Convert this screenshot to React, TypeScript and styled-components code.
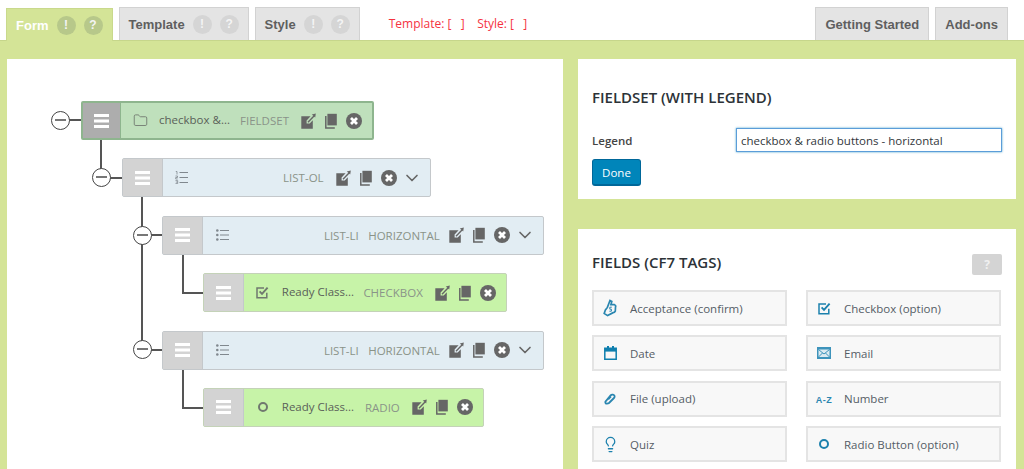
import React, { FC, ReactNode } from "react";
import styled, { createGlobalStyle } from "styled-components";
import { Folder, ChevronDown, Lightbulb } from "lucide-react";

const GlobalStyle = createGlobalStyle`
  html, body {
    margin: 0;
    padding: 0;
    height: 469px;
    overflow: hidden;
    background: #fff;
    font-family: "Open Sans", "Liberation Sans", sans-serif;
  }
`;

const EditIcon: FC = () => (
  <svg width="15" height="16" viewBox="0 0 15 16">
    <path d="M0.3 3.3H9.6L5.6 7.4V10.6H8.7L11.8 7.2V15.7H0.3z" fill="#666" />
    <path d="M7 9.3L13 3" stroke="#666" strokeWidth="1.4" fill="none" />
    <path d="M10.8 1.4L14.8 0.6L14.2 4.6z" fill="#666" />
  </svg>
);

const CopyIcon: FC = () => (
  <svg width="12" height="16" viewBox="0 0 12 16">
    <path d="M2.4 0.8h9.4v11.6H2.4z" fill="#666" />
    <path d="M0.8 3v12h9" stroke="#666" strokeWidth="1.5" fill="none" />
  </svg>
);

const RemoveIcon: FC = () => (
  <svg width="16" height="16" viewBox="0 0 16 16">
    <circle cx="8" cy="8" r="8" fill="#666" />
    <path d="M5 5l6 6M11 5l-6 6" stroke="#fff" strokeWidth="2.8" />
  </svg>
);

const HandleBars: FC = () => (
  <svg width="15" height="14" viewBox="0 0 15 14">
    <path d="M0 0h15v3H0zM0 5.5h15v3H0zM0 11h15v3H0z" fill="#fff" />
  </svg>
);

const RingIcon: FC<{ color: string }> = ({ color }) => (
  <svg width="12" height="12" viewBox="0 0 12 12">
    <circle cx="6" cy="6" r="4" fill="none" stroke={color} strokeWidth="2" />
  </svg>
);

const BulletListIcon: FC = () => (
  <svg width="13" height="12" viewBox="0 0 13 12">
    <circle cx="1.3" cy="1.5" r="1.3" fill="#80888e" />
    <circle cx="1.3" cy="6" r="1.3" fill="#80888e" />
    <circle cx="1.3" cy="10.5" r="1.3" fill="#80888e" />
    <path d="M4 1.5H13M4 6H13M4 10.5H13" stroke="#80888e" />
  </svg>
);

const OrderedListIcon: FC = () => (
  <svg width="13" height="13" viewBox="0 0 13 13">
    <path d="M0.8 0.5h1.2v3M0.5 5h2v1.5H0.7V8h2M0.5 9.6h2.2v3H0.5M0.9 11.1h1.8" stroke="#80888e" strokeWidth="0.8" fill="none" />
    <path d="M4.5 1.5H13M4.5 6.5H13M4.5 11.5H13" stroke="#80888e" />
  </svg>
);

const CheckIcon: FC<{ color: string }> = ({ color }) => (
  <svg width="13" height="13" viewBox="0 0 13 13">
    <path d="M10.8 6.8V11.8H1V2H8" fill="none" stroke={color} strokeWidth="1.5" />
    <path d="M3.6 5.4L6 7.8L11.6 1.6" fill="none" stroke={color} strokeWidth="1.9" />
  </svg>
);

const ThumbIcon: FC = () => (
  <svg width="14" height="18" viewBox="0 0 14 18">
    <path d="M7 1.5l1.8 1-.9 3.2h3.6c1 .4 1.4 1.4 1 2.4l-.2 4c-.4 1-1.2 1.6-2.2 1.6L4.6 16.6 1.2 14.4 2.4 11l2-2.6z" fill="none" stroke="#2a86b0" strokeWidth="1.7" />
    <path d="M8.8 8.2h-2v2h1.6v2h-2" fill="none" stroke="#2a86b0" />
  </svg>
);

const CalendarIcon: FC = () => (
  <svg width="13" height="14" viewBox="0 0 13 14">
    <path d="M0.8 2.2h11.4v11H0.8z" fill="none" stroke="#0f7fae" strokeWidth="1.5" />
    <path d="M0.8 2h11.4v3.6H0.8z" fill="#0f7fae" />
    <path d="M3 0h2v3H3zM8 0h2v3H8z" fill="#0f7fae" />
  </svg>
);

const MailIcon: FC = () => (
  <svg width="14" height="12" viewBox="0 0 14 12">
    <path d="M0 0h14v12H0z" fill="#3d93bb" />
    <path d="M1.5 2.5h11v7.5h-11z" fill="#dbeaf1" />
    <path d="M1.5 2.5L7 7l5.5-4.5M1.5 10l4-4M12.5 10l-4-4" fill="none" stroke="#3d93bb" />
  </svg>
);

const ClipIcon: FC = () => (
  <svg width="12" height="12" viewBox="0 0 12 12">
    <path d="M4.4 6.2L7 3.4M3 10.6C1.8 10.8 1 9.8 1.4 8.6L6.6 2.4C7.8 1 10.2 1.6 10.6 3 10.8 3.8 10.6 4.4 10 5L5 10C4.4 10.5 3.8 10.6 3 10.6z" fill="none" stroke="#2a86b0" strokeWidth="1.8" />
  </svg>
);

const Tabs = styled.header`
  display: flex;
  align-items: flex-end;
  height: 40px;
  padding: 0 10px 0 6px;
`;

const Tab = styled.div<{ $active?: boolean }>`
  display: flex;
  align-items: center;
  height: 33px;
  box-sizing: border-box;
  padding: 0 9px;
  margin-right: 6px;
  gap: 8px;
  border: 1px solid ${(p) => (p.$active ? "#c9d98c" : "#d2d2d2")};
  border-bottom: none;
  background: ${(p) => (p.$active ? "#d4e497" : "#e4e4e4")};
  color: ${(p) => (p.$active ? "#fff" : "#5f5f5f")};
  font: bold 13px "Liberation Sans", Arial, sans-serif;
  position: relative;
  top: ${(p) => (p.$active ? "1px" : "0")};
`;

const Badge = styled.span<{ $active?: boolean }>`
  width: 19px;
  height: 19px;
  border-radius: 50%;
  display: flex;
  align-items: center;
  justify-content: center;
  background: ${(p) => (p.$active ? "#b7c88a" : "#d5d5d5")};
  color: #f4f4f4;
  font-size: 12px;
  font-weight: bold;
`;

const Status = styled.div`
  margin: 0 0 8px 23px;
  color: #f5333f;
  font-size: 12px;
  line-height: 17px;
  white-space: pre;
`;

const Spacer = styled.div`
  flex: 1;
`;

const Band = styled.main`
  display: grid;
  grid-template-columns: 556px 438px;
  column-gap: 15px;
  align-items: start;
  height: 429px;
  box-sizing: border-box;
  padding: 18px 8px 0 7px;
  background: #d4e497;
  border-top: 1px solid #c6d68b;
`;

const TreePanel = styled.section`
  position: relative;
  height: 410px;
  background: #fff;
  padding-top: 42px;
  box-sizing: border-box;
`;

const Node = styled.div<{ $level: number; $width: number; $bg: string; $border: string }>`
  position: relative;
  display: flex;
  align-items: center;
  height: 39px;
  box-sizing: border-box;
  width: ${(p) => p.$width}px;
  margin: 0 0 18.4px ${(p) => 74 + p.$level * 40.6}px;
  background: ${(p) => p.$bg};
  border: ${(p) => (p.$level === 0 ? 2 : 1)}px solid ${(p) => p.$border};
  border-radius: 2px;
  color: #8a9389;
  font-size: 11.5px;
`;

const Handle = styled.div<{ $dark?: boolean }>`
  width: ${(p) => (p.$dark ? 37 : 39)}px;
  align-self: stretch;
  flex: none;
  display: flex;
  align-items: center;
  justify-content: center;
  background: ${(p) => (p.$dark ? "#adadad" : "#d3d3d3")};
  border-right: 1px solid ${(p) => (p.$dark ? "#8eb58e" : "#c4c8cb")};
`;

const TypeIcon = styled.span`
  width: 38px;
  flex: none;
  display: flex;
  justify-content: center;
  color: #70786f;
`;

const Title = styled.span`
  color: #5a5f59;
  white-space: nowrap;
  margin-bottom: 2px;
`;

const Right = styled.div`
  margin-left: auto;
  display: flex;
  align-items: center;
`;

const Tag = styled.span<{ $tight?: boolean }>`
  margin-right: ${(p) => (p.$tight ? 9.5 : 12)}px;
  white-space: nowrap;
`;

const Actions = styled.span`
  display: flex;
  align-items: center;
  gap: 9px;
  padding-right: 10px;
`;

const Chevron = styled.span`
  display: flex;
  margin: 0 8px 0 -5px;
  color: #666;
`;

const Toggle = styled.span<{ $x: number; $y: number }>`
  position: absolute;
  left: ${(p) => p.$x - 9.5}px;
  top: ${(p) => p.$y - 9.5}px;
  width: 19px;
  height: 19px;
  box-sizing: border-box;
  border: 1.5px solid #444;
  border-radius: 50%;
  background: #fff;
  z-index: 2;
  &::after {
    content: "";
    position: absolute;
    left: 3px;
    right: 3px;
    top: 7px;
    height: 2px;
    background: #777;
  }
`;

const Line = styled.span<{ $x: number; $y: number; $w?: number; $h?: number }>`
  position: absolute;
  left: ${(p) => p.$x}px;
  top: ${(p) => p.$y}px;
  width: ${(p) => p.$w ?? 2}px;
  height: ${(p) => p.$h ?? 2}px;
  background: #555;
`;

const Side = styled.div`
  display: flex;
  flex-direction: column;
  gap: 30px;
`;

const Card = styled.section<{ $height: number }>`
  background: #fff;
  height: ${(p) => p.$height}px;
  box-sizing: border-box;
  padding: 0 14px;
`;

const CardHead = styled.div`
  display: flex;
  align-items: flex-start;
  justify-content: space-between;
`;

const Heading = styled.h2<{ $top: number }>`
  margin: ${(p) => p.$top}px 0 0;
  font-size: 15px;
  line-height: 20px;
  font-weight: 600;
  color: #2c3237;
`;

const FormRow = styled.div`
  display: flex;
  align-items: center;
  justify-content: space-between;
  margin-top: 21px;
`;

const Label = styled.label`
  font-size: 11.5px;
  font-weight: 600;
  color: #444;
`;

const TextInput = styled.input`
  width: 266px;
  height: 24px;
  box-sizing: border-box;
  padding: 0 4px;
  border: 1px solid #5b9dd9;
  box-shadow: 0 0 2px rgba(30, 140, 190, 0.8);
  outline: none;
  font: 11.5px "Open Sans", sans-serif;
  color: #32373c;
`;

const DoneButton = styled.button`
  display: block;
  margin-top: 7px;
  width: 49px;
  height: 27px;
  padding: 0;
  background: #0085ba;
  border: 1px solid #006799;
  border-bottom-width: 2px;
  border-radius: 3px;
  color: #fff;
  font: 11.5px "Open Sans", sans-serif;
`;

const HelpButton = styled.span`
  width: 30px;
  height: 21px;
  margin-top: 25px;
  border-radius: 2px;
  background: #d4d4d4;
  color: #f0f0f0;
  font-size: 12px;
  font-weight: bold;
  display: flex;
  align-items: center;
  justify-content: center;
`;

const FieldGrid = styled.div`
  display: grid;
  grid-template-columns: 195px 195px;
  column-gap: 19px;
  row-gap: 9.4px;
  margin-top: 15px;
`;

const FieldButton = styled.div`
  display: flex;
  align-items: center;
  height: 36px;
  box-sizing: border-box;
  border: 2px solid #e4e4e4;
  background: #f8f8f8;
  color: #555d66;
  font-size: 11.5px;
  overflow: hidden;
`;

const FieldIcon = styled.span`
  width: 32px;
  margin-right: 4px;
  flex: none;
  display: flex;
  justify-content: center;
  color: #1c81ad;
`;

const AzGlyph = styled.span`
  font: bold 9px "Liberation Sans", sans-serif;
  letter-spacing: 0.5px;
  color: #2a86b0;
  white-space: nowrap;
  padding-top: 2px;
`;

interface TreeItem {
  level: number;
  width: number;
  kind: "fieldset" | "list" | "field";
  icon: ReactNode;
  title?: string;
  tags: string[];
}

const treeItems: TreeItem[] = [
  { level: 0, width: 293, kind: "fieldset", icon: <Folder size={15} strokeWidth={1.4} />, title: "checkbox &...", tags: ["FIELDSET"] },
  { level: 1, width: 309, kind: "list", icon: <OrderedListIcon />, tags: ["LIST-OL"] },
  { level: 2, width: 382, kind: "list", icon: <BulletListIcon />, tags: ["LIST-LI", "HORIZONTAL"] },
  { level: 3, width: 304, kind: "field", icon: <CheckIcon color="#70786f" />, title: "Ready Class...", tags: ["CHECKBOX"] },
  { level: 2, width: 382, kind: "list", icon: <BulletListIcon />, tags: ["LIST-LI", "HORIZONTAL"] },
  { level: 3, width: 281, kind: "field", icon: <RingIcon color="#70786f" />, title: "Ready Class...", tags: ["RADIO"] },
];

const palette = {
  fieldset: { bg: "#bfe0bc", border: "#8eb58e" },
  list: { bg: "#e2edf3", border: "#c4c8cb" },
  field: { bg: "#c7f3a8", border: "#c4d2b8" },
};

const fields: { label: string; icon: ReactNode }[] = [
  { label: "Acceptance (confirm)", icon: <ThumbIcon /> },
  { label: "Checkbox (option)", icon: <CheckIcon color="#1c81ad" /> },
  { label: "Date", icon: <CalendarIcon /> },
  { label: "Email", icon: <MailIcon /> },
  { label: "File (upload)", icon: <ClipIcon /> },
  { label: "Number", icon: <AzGlyph>A-Z</AzGlyph> },
  { label: "Quiz", icon: <Lightbulb size={17} strokeWidth={1.8} /> },
  { label: "Radio Button (option)", icon: <RingIcon color="#1c81ad" /> },
];

const App: FC = () => (
  <>
    <GlobalStyle />
    <Tabs>
      <Tab $active>
        Form
        <Badge $active>!</Badge>
        <Badge $active>?</Badge>
      </Tab>
      <Tab>
        Template
        <Badge>!</Badge>
        <Badge>?</Badge>
      </Tab>
      <Tab>
        Style
        <Badge>!</Badge>
        <Badge>?</Badge>
      </Tab>
      <Status>{"Template: [   ]    Style: [   ]"}</Status>
      <Spacer />
      <Tab>Getting Started</Tab>
      <Tab>Add-ons</Tab>
    </Tabs>
    <Band>
      <TreePanel>
        <Line $x={62} $y={60} $w={12} />
        <Toggle $x={53} $y={61} />
        <Line $x={93} $y={80} $h={30} />
        <Line $x={102} $y={118} $w={13} />
        <Toggle $x={94} $y={118.5} />
        <Line $x={134} $y={138} $h={144} />
        <Line $x={143} $y={175} $w={13} />
        <Toggle $x={135} $y={176} />
        <Line $x={143} $y={290} $w={13} />
        <Toggle $x={135} $y={290.5} />
        <Line $x={175} $y={195} $h={39} />
        <Line $x={175} $y={233} $w={21} />
        <Line $x={175} $y={310} $h={39} />
        <Line $x={175} $y={348} $w={21} />
        {treeItems.map((item, i) => (
          <Node key={i} $level={item.level} $width={item.width} $bg={palette[item.kind].bg} $border={palette[item.kind].border}>
            <Handle $dark={item.kind === "fieldset"}>
              <HandleBars />
            </Handle>
            <TypeIcon>{item.icon}</TypeIcon>
            {item.title && <Title>{item.title}</Title>}
            <Right>
              {item.tags.map((t) => (
                <Tag key={t} $tight={item.tags.length > 1}>{t}</Tag>
              ))}
              <Actions>
                <EditIcon />
                <CopyIcon />
                <RemoveIcon />
              </Actions>
              {item.kind === "list" && (
                <Chevron>
                  <ChevronDown size={20} strokeWidth={2} />
                </Chevron>
              )}
            </Right>
          </Node>
        ))}
      </TreePanel>
      <Side>
        <Card $height={140}>
          <Heading $top={28}>FIELDSET (WITH LEGEND)</Heading>
          <FormRow>
            <Label>Legend</Label>
            <TextInput readOnly value="checkbox & radio buttons - horizontal" />
          </FormRow>
          <DoneButton>Done</DoneButton>
        </Card>
        <Card $height={240}>
          <CardHead>
            <Heading $top={23}>FIELDS (CF7 TAGS)</Heading>
            <HelpButton>?</HelpButton>
          </CardHead>
          <FieldGrid>
            {fields.map((f) => (
              <FieldButton key={f.label}>
                <FieldIcon>{f.icon}</FieldIcon>
                {f.label}
              </FieldButton>
            ))}
          </FieldGrid>
        </Card>
      </Side>
    </Band>
  </>
);

export default App;
